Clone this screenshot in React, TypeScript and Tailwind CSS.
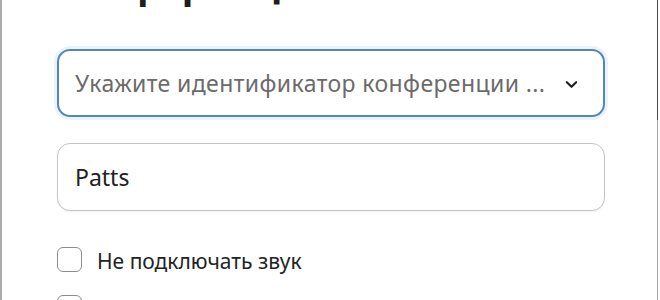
import React from "react";

const font = { fontFamily: '"Noto Sans", "Open Sans", sans-serif' };

function ChevronDown() {
  return (
    <svg viewBox="0 0 16 16" className="mt-[3px] h-[15px] w-[15px]" fill="none">
      <path d="M3 5.5 8 10.5 13 5.5" stroke="#1f1f1f" strokeWidth={2.2} strokeLinecap="round" strokeLinejoin="round" />
    </svg>
  );
}

function Checkbox({ label }: { label: string }) {
  return (
    <label className="flex h-[25px] shrink-0 items-center gap-[15px]">
      <span className="h-[25px] w-[25px] shrink-0 rounded-[6px] border-[1.5px] border-[#8c8c8c] bg-white" />
      <span className="mt-[3px] text-[21px] leading-none text-[#232323]">{label}</span>
    </label>
  );
}

export default function App() {
  return (
    <div className="flex h-[300px] w-[660px] overflow-hidden bg-white" style={font}>
      <div className="flex min-w-0 flex-1 flex-col border-l-2 border-[#adadad] pl-[55px] pr-[52px]">
        <div className="h-[7px] shrink-0 overflow-hidden">
          <div className="-mt-[39px] -ml-[6px] text-[39px] font-bold leading-[46px] text-[#1e1e1e]">Конференция</div>
        </div>

        <div className="mt-[42px] flex h-[68px] shrink-0 items-center justify-between rounded-[13px] border-2 border-[#5287be] bg-white pl-[16px] pr-[24px] shadow-[0_0_0_3px_#eaf4fc]">
          <span className="truncate text-[23px] tracking-[0.4px] text-[#6b6b6b]">Укажите идентификатор конференции ...</span>
          <ChevronDown />
        </div>

        <div className="mt-[26px] flex h-[68px] shrink-0 items-center rounded-[13px] border border-[#c4c4c4] bg-white pl-[17px] shadow-[0_1px_2px_rgba(0,0,0,0.06)]">
          <span className="text-[23px] text-[#222]">Patts</span>
        </div>

        <div className="mt-[36px] flex shrink-0 flex-col gap-[23px]">
          <Checkbox label="Не подключать звук" />
          <Checkbox label="Выключить мое видео" />
        </div>
      </div>
      <div className="flex w-px shrink-0 flex-col">
        <div className="h-[120px] bg-[#4b4b4b]" />
        <div className="flex-1 bg-[#a5a5a5]" />
      </div>
      <div className="w-[2px] shrink-0" />
    </div>
  );
}
